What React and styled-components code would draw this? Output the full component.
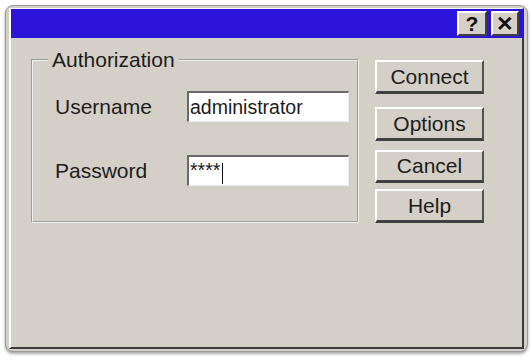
import React from "react";
import styled, { createGlobalStyle } from "styled-components";

const GlobalStyle = createGlobalStyle`
  html, body {
    margin: 0;
    background: #ffffff;
  }
  body {
    font-family: "Liberation Sans", Arial, sans-serif;
    color: #1c1c1c;
  }
`;

const Page = styled.div`
  padding: 5px;
`;

const Window = styled.div`
  width: 523px;
  height: 347px;
  box-sizing: border-box;
  background: #d4d0c8;
  border: 1px solid #9a9a9a;
  border-radius: 8px;
  box-shadow: 0 2px 3px rgba(0, 0, 0, 0.35);
  padding: 2px 3px 2px 3px;
`;

const Frame = styled.div`
  height: 100%;
  box-sizing: border-box;
  border-top: 1px solid #f4f4f4;
  border-left: 2px solid #ffffff;
  border-right: 2px solid #3c3c3c;
  border-bottom: 2px solid #3c3c3c;
  display: flex;
  flex-direction: column;
`;

const TitleBar = styled.div`
  height: 29px;
  background: #2b15db;
  display: flex;
  justify-content: flex-end;
  align-items: center;
  gap: 4px;
  padding: 0 5px 0 0;
  margin-right: -2px;
`;

const TitleButton = styled.div`
  width: ${(p) => p.$w}px;
  height: 25px;
  box-sizing: border-box;
  background: #d4d0c8;
  border-top: 2px solid #ffffff;
  border-left: 2px solid #ffffff;
  border-right: 2px solid #404040;
  border-bottom: 2px solid #404040;
  display: flex;
  align-items: center;
  justify-content: center;
  font-weight: bold;
  font-size: 21px;
  line-height: 1;
  color: #111;
`;

const Body = styled.div`
  display: flex;
  align-items: flex-start;
  gap: 16px;
  padding: 10px 0 0 20px;
`;

const GroupBox = styled.fieldset`
  width: 328px;
  box-sizing: border-box;
  margin: 0;
  padding: 0 8px 35px 15px;
  border: 2px groove #f0f0f0;
  min-inline-size: 0;
`;

const Legend = styled.legend`
  font-size: 21px;
  line-height: 24px;
  padding: 0 4px;
`;

const FormGrid = styled.div`
  display: grid;
  grid-template-columns: 132px 162px;
  row-gap: 33px;
  align-items: center;
  margin: 19px 0 0 7px;
`;

const Label = styled.div`
  font-size: 21px;
`;

const Field = styled.div`
  height: 31px;
  box-sizing: border-box;
  background: #ffffff;
  border-top: 2px solid #6a6a6a;
  border-left: 2px solid #6a6a6a;
  border-right: 1px solid #ececec;
  border-bottom: 1px solid #ececec;
  font-size: 19.5px;
  line-height: 26px;
  padding-left: 1px;
  display: flex;
  align-items: ${(p) => (p.$top ? "flex-start" : "center")};
  white-space: nowrap;
`;

const Caret = styled.span`
  display: inline-block;
  width: 1px;
  height: 21px;
  background: #111;
  margin: 6px 0 0 2px;
`;

const ButtonColumn = styled.div`
  width: 109px;
  display: flex;
  flex-direction: column;
  margin-top: 12px;
`;

const Button = styled.div`
  height: ${(p) => p.$h}px;
  margin-top: ${(p) => p.$space}px;
  box-sizing: border-box;
  background: #d4d0c8;
  border-top: 2px solid #ffffff;
  border-left: 2px solid #ffffff;
  border-right: 2px solid #505050;
  border-bottom: 3px solid #404040;
  display: flex;
  align-items: center;
  justify-content: center;
  font-size: 21px;
`;

const buttons = [
  { label: "Connect", space: 0, h: 34 },
  { label: "Options", space: 13, h: 34 },
  { label: "Cancel", space: 9, h: 33 },
  { label: "Help", space: 6, h: 34 },
];

export default function App() {
  return (
    <Page>
      <GlobalStyle />
      <Window>
        <Frame>
          <TitleBar>
            <TitleButton $w={30}>?</TitleButton>
            <TitleButton $w={28}>✕</TitleButton>
          </TitleBar>
          <Body>
            <GroupBox>
              <Legend>Authorization</Legend>
              <FormGrid>
                <Label>Username</Label>
                <Field>administrator</Field>
                <Label>Password</Label>
                <Field $top>
                  ****
                  <Caret />
                </Field>
              </FormGrid>
            </GroupBox>
            <ButtonColumn>
              {buttons.map((b) => (
                <Button key={b.label} $space={b.space} $h={b.h}>
                  {b.label}
                </Button>
              ))}
            </ButtonColumn>
          </Body>
        </Frame>
      </Window>
    </Page>
  );
}
